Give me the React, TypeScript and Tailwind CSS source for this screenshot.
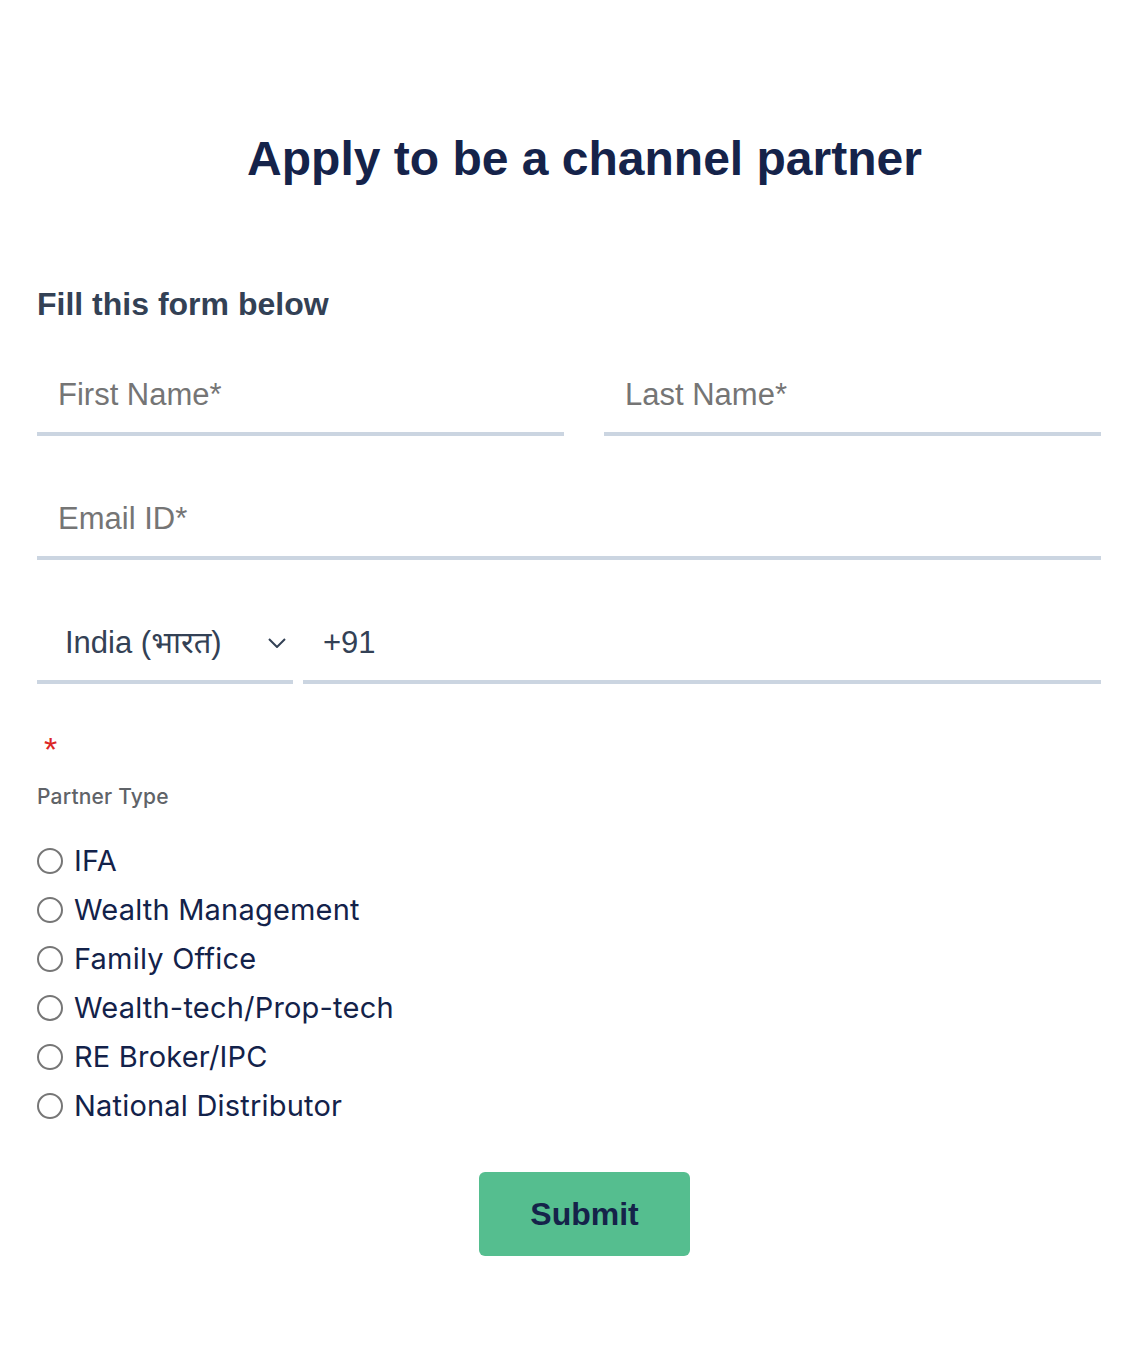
import { useState } from 'react';

const PARTNER_TYPES = [
  'IFA',
  'Wealth Management',
  'Family Office',
  'Wealth-tech/Prop-tech',
  'RE Broker/IPC',
  'National Distributor',
];

function UnderlineInput({ placeholder, className = '' }: { placeholder: string; className?: string }) {
  return (
    <input
      type="text"
      placeholder={placeholder}
      className={`h-[78px] border-b-4 border-[#cbd5e1] bg-transparent px-[21px] text-[31px] text-[#334155] outline-none placeholder:text-[#757575] ${className}`}
    />
  );
}

export default function App() {
  const [partner, setPartner] = useState<string | null>(null);

  return (
    <div className="min-h-[1357px] bg-white pl-[37px] pt-[131px] pb-[101px] font-['Liberation_Sans','Noto_Sans',sans-serif]">
      <h1 className="text-center text-[48px] font-bold leading-[56px] text-[#15234a]">
        Apply to be a channel partner
      </h1>

      <form className="mt-[98px] pr-[31px]" onSubmit={(e) => e.preventDefault()}>
        <h2 className="text-[32px] font-bold leading-[38px] text-[#334155]">Fill this form below</h2>

        {/* Name row */}
        <div className="mt-[35px] flex gap-[40px]">
          <UnderlineInput placeholder="First Name*" className="w-[527px] shrink-0" />
          <UnderlineInput placeholder="Last Name*" className="min-w-0 flex-1" />
        </div>

        {/* Email */}
        <div className="mt-[46px]">
          <UnderlineInput placeholder="Email ID*" className="w-full" />
        </div>

        {/* Phone */}
        <div className="mt-[46px] flex gap-[10px]">
          <div className="flex h-[78px] w-[256px] shrink-0 items-center justify-between border-b-4 border-[#cbd5e1] pl-[28px] pr-[7px] text-[31px] text-[#334155]">
            <span>India (भारत)</span>
            <svg width="18" height="10" viewBox="0 0 18 10" fill="none" stroke="#334155" strokeWidth="2">
              <path d="M1 1l8 8 8-8" />
            </svg>
          </div>
          <input
            type="tel"
            defaultValue="+91"
            className="h-[78px] min-w-0 flex-1 border-b-4 border-[#cbd5e1] bg-transparent px-[20px] text-[31px] text-[#334155] outline-none"
          />
        </div>

        {/* Partner type */}
        <div className="mt-[45px] h-[30px] pl-[7px] text-[34px] leading-[40px] text-[#dc2626]">*</div>
        <div className="mt-[24px] font-['Inter',sans-serif] text-[21px] font-medium leading-[28px] tracking-[0.2px] text-[#5f6368]">
          Partner Type
        </div>

        <div className="mt-[25px] flex flex-col font-['Inter',sans-serif]">
          {PARTNER_TYPES.map((t) => (
            <label
              key={t}
              className="flex h-[49px] cursor-pointer items-center gap-[11px] text-[29px] tracking-[0.2px] text-[#13224a]"
            >
              <input
                type="radio"
                name="partner"
                checked={partner === t}
                onChange={() => setPartner(t)}
                className="h-[26px] w-[26px] shrink-0 appearance-none rounded-full border-2 border-[#767676] checked:border-[8px] checked:border-[#15234a]"
              />
              <span>{t}</span>
            </label>
          ))}
        </div>
      </form>

      <div className="mt-[42px] flex justify-center">
        <button
          type="submit"
          className="h-[84px] w-[211px] rounded-[6px] bg-[#55be8f] text-[32px] font-bold text-[#15234a]"
        >
          Submit
        </button>
      </div>
    </div>
  );
}
